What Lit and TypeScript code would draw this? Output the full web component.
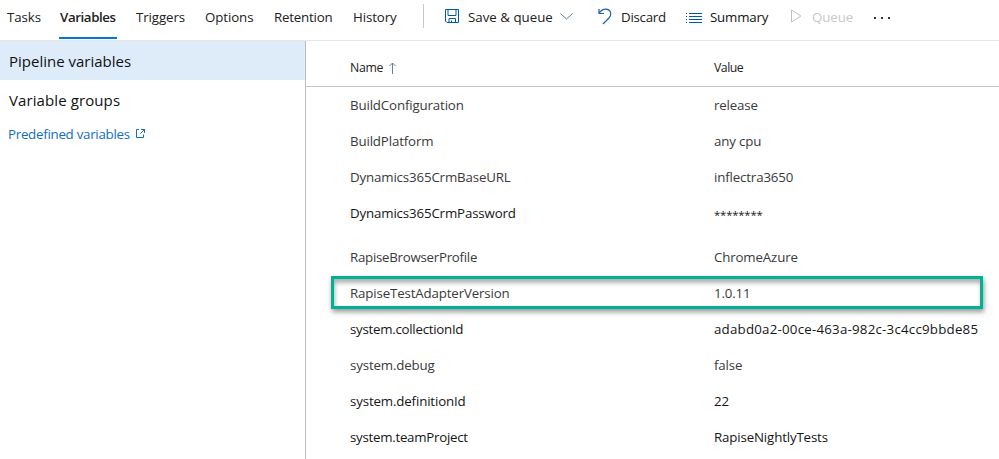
import { LitElement, html, css, svg } from "lit";
import { customElement } from "lit/decorators.js";
import { classMap } from "lit/directives/class-map.js";

interface Variable {
  name: string;
  value: string;
  dark?: boolean;
  kind?: "secret" | "marked" | "guid";
  tight?: boolean;
}

const TABS = ["Tasks", "Variables", "Triggers", "Options", "Retention", "History"];

const VARIABLES: Variable[] = [
  { name: "BuildConfiguration", value: "release" },
  { name: "BuildPlatform", value: "any cpu" },
  { name: "Dynamics365CrmBaseURL", value: "inflectra3650" },
  { name: "Dynamics365CrmPassword", value: "********", dark: true, kind: "secret" },
  { name: "RapiseBrowserProfile", value: "ChromeAzure", tight: true },
  { name: "RapiseTestAdapterVersion", value: "1.0.11", kind: "marked" },
  { name: "system.collectionId", value: "adabd0a2-00ce-463a-982c-3c4cc9bbde85", dark: true, kind: "guid", tight: true },
  { name: "system.debug", value: "false" },
  { name: "system.definitionId", value: "22", dark: true },
  { name: "system.teamProject", value: "RapiseNightlyTests", dark: true, tight: true },
];

const icon = (cls: string, w: number, h: number, body: unknown) =>
  html`<svg class="icon ${cls}" width=${w} height=${h} viewBox="0 0 ${w} ${h}">${body}</svg>`;

const saveIcon = icon("save", 14, 14, svg`
  <path d="M.5 .5h13v13h-11.5l-1.5-1.5z M3 .5v6h8v-6 M4 13.5v-4h6.500v4 M6.500 13.500v-2"/>`);
const chevronIcon = icon("chevron", 13, 7, svg`<path d="M.5 .5l6 5.500 6-5.500"/>`);
const undoIcon = icon("undo", 14, 17, svg`
  <path d="M1 1v4.500h5 M1 5.300C3 2.500 5.200 1 8 1.200c3 .2 4.700 2.400 4.700 5 0 1.500-.6 2.600-1.700 3.800l-6 6"/>`);
const listIcon = icon("list", 16, 11, svg`
  <path d="M3 .5h13M3 3.500h13M3 6.500h13M3 9.500h13M0 .5h1M0 3.500h1M0 6.500h1M0 9.500h1"/>`);
const playIcon = icon("play", 11, 14, svg`<path d="M.5 .9v12.200l9.400-6.100z"/>`);
const openIcon = icon("open", 9, 9, svg`
  <path d="M3 .5h-2.500v8h7v-3 M5 .5h3.500v3.500 M8.500 .5l-4 4"/>`);
const sortIcon = icon("sort", 7, 12, svg`<path d="M3.500 12v-11 M.5 4l3-3 3 3"/>`);

@customElement("app-root")
export class AppRoot extends LitElement {
  static styles = css`
    :host {
      display: flex;
      flex-direction: column;
      width: 999px;
      height: 459px;
      overflow: hidden;
      background: #fff;
      color: #212121;
      font: 13.3px/20px "Open Sans", "Noto Sans", sans-serif;
      white-space: nowrap;
    }
    .icon { display: block; flex: none; fill: none; stroke: #005a9e; stroke-width: 1; }
    .top {
      flex: none;
      height: 40px;
      display: flex;
      border-bottom: 1px solid #e6e6e6;
      letter-spacing: -0.1px;
    }
    .tabs { display: flex; padding-left: 6px; gap: 18px; height: 39px; }
    .tab { box-sizing: border-box; padding: 7px 1px 0; border-bottom: 2px solid transparent; }
    .tab.t0 { width: 35px; }
    .tab.t1 { width: 58px; font-weight: 600; letter-spacing: -0.4px; border-color: #0078d4; }
    .tab.t2 { width: 51px; }
    .tab.t3 { width: 51px; }
    .tab.t4 { width: 61px; letter-spacing: -0.2px; }
    .tab.t5 { width: 46px; }
    .divider { width: 1px; height: 24px; margin: 4px 21px 0 25px; background: #c8c8c8; }
    .tools { display: flex; }
    .tool { display: flex; height: 34px; align-items: center; }
    .save-tool { width: 153px; }
    .save-tool .label { width: 84px; padding-left: 9px; margin-right: 8px; letter-spacing: 0; }
    .undo-tool { width: 88px; }
    .undo-tool .label { padding-left: 9px; letter-spacing: -0.25px; }
    .list-tool { width: 105px; }
    .list-tool .label { padding-left: 8px; color: #111; letter-spacing: -0.2px; }
    .play-tool { width: 83px; color: #c8c8c8; }
    .play-tool .label { padding-left: 10px; }
    .save { margin-bottom: 2px; }
    .chevron { stroke: #5f8096; margin-bottom: 2px; }
    .undo { stroke: #1b5fae; stroke-width: 1.2; margin-bottom: 2px; }
    .list { margin-top: 2px; }
    .play { stroke: #bebebe; margin-bottom: 2px; }
    .more { display: flex; gap: 5px; padding-top: 17px; }
    .more i { width: 2px; height: 2px; background: #333; }

    .main { flex: 1; display: flex; min-height: 0; }
    .side { flex: none; width: 305px; border-right: 1px solid #bdbdbd; }
    .side-item { height: 39px; line-height: 40px; padding-left: 9px; font-size: 15px; color: #111; }
    .side-item + .side-item { letter-spacing: 0.1px; }
    .side-item.selected { background: #deecf9; }
    .link { display: flex; align-items: center; gap: 6px; padding-left: 8px; height: 29px; color: #106ebe; letter-spacing: -0.26px; }
    .open { stroke: #106ebe; }

    .content { flex: 1; min-width: 0; }
    .row {
      display: grid;
      grid-template-columns: 364px 1fr;
      padding-left: 44px;
      height: 36px;
      line-height: 36px;
      color: #3a3a3a;
      letter-spacing: -0.15px;
    }
    .row.dark { color: #161616; }
    .row.tight .name { letter-spacing: -0.27px; }
    .row.guid .value { letter-spacing: 0.22px; }
    .row.head { height: 45px; line-height: 53px; border-bottom: 1px solid #c4c4c4; font-size: 12.300px; color: #212121; letter-spacing: -0.3px; }
    .row.head .value-head { letter-spacing: -0.5px; }
    .name-head { display: flex; gap: 6px; }
    .sort { stroke: #60858f; margin-top: 21px; }
    .row.secret { margin-bottom: 8px; }
    .row.secret .value { padding-top: 2px; font-size: 11.300px; }
    .marked { position: relative; }
    .marked::after {
      content: "";
      position: absolute;
      box-sizing: border-box;
      left: 25px;
      top: 1px;
      width: 652px;
      height: 33px;
      border: 3px solid #00b294;
      box-shadow: 1px 3px 5px rgba(0, 0, 0, 0.4), inset 1px 4px 4px rgba(0, 0, 0, 0.3);
    }
  `;

  render() {
    return html`
      <header class="top">
        <nav class="tabs">
          ${TABS.map((t, i) => html`<div class="tab t${i}">${t}</div>`)}
        </nav>
        <div class="divider"></div>
        <div class="tools">
          <div class="tool save-tool">${saveIcon}<span class="label">Save &amp; queue</span>${chevronIcon}</div>
          <div class="tool undo-tool">${undoIcon}<span class="label">Discard</span></div>
          <div class="tool list-tool">${listIcon}<span class="label">Summary</span></div>
          <div class="tool play-tool">${playIcon}<span class="label">Queue</span></div>
          <div class="more"><i></i><i></i><i></i></div>
        </div>
      </header>
      <div class="main">
        <aside class="side">
          <div class="side-item selected">Pipeline variables</div>
          <div class="side-item">Variable groups</div>
          <div class="link"><span>Predefined variables</span>${openIcon}</div>
        </aside>
        <section class="content">
          <div class="row head">
            <div class="name-head"><span>Name</span>${sortIcon}</div>
            <div class="value-head">Value</div>
          </div>
          ${VARIABLES.map((v) => html`
            <div class=${classMap({
              row: true,
              dark: !!v.dark,
              tight: !!v.tight,
              secret: v.kind === "secret",
              marked: v.kind === "marked",
              guid: v.kind === "guid",
            })}>
              <div class="name">${v.name}</div>
              <div class="value">${v.value}</div>
            </div>`)}
        </section>
      </div>
    `;
  }
}
